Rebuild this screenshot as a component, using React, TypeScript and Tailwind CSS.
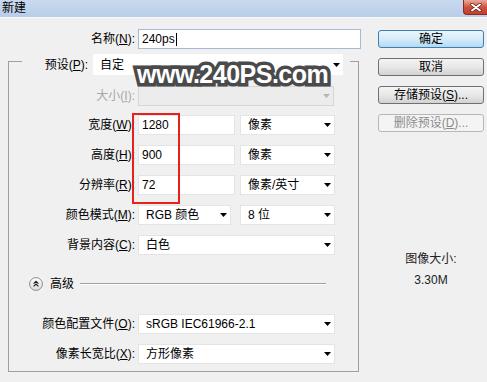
import React from 'react';

const font = "[font-family:'Liberation_Sans','Noto_Sans_CJK_SC',sans-serif]";

function Arrow({ gray }: { gray?: boolean }) {
  return (
    <svg width="7" height="4" viewBox="0 0 7 4" className="mr-[3px] shrink-0">
      <path d="M0 0h7L3.5 4z" fill={gray ? '#b4b4b4' : '#000'} />
    </svg>
  );
}

function Select({ w, children, disabled }: { w: string; children?: React.ReactNode; disabled?: boolean }) {
  return (
    <div
      className={`flex h-[20px] items-center justify-between pl-[7px] ${w} ${
        disabled ? 'border border-[#d6d6d6] bg-[#ececec]' : 'border border-[#e4e4e4] bg-white'
      }`}
    >
      <span className="whitespace-nowrap">{children}</span>
      <Arrow gray={disabled} />
    </div>
  );
}

function Field({ w, children }: { w: string; children: React.ReactNode }) {
  return (
    <div className={`flex h-[20px] items-center border border-[#e4e4e4] bg-white pl-[3px] ${w}`}>{children}</div>
  );
}

function Label({ children, gray }: { children: React.ReactNode; gray?: boolean }) {
  return (
    <div className={`w-[126px] shrink-0 whitespace-nowrap text-right ${gray ? 'text-[#a8a8a8]' : 'text-black'}`}>
      {children}
    </div>
  );
}

function Button({ children, primary, disabled }: { children: React.ReactNode; primary?: boolean; disabled?: boolean }) {
  const look = primary
    ? 'border-[#3c7fb1] bg-linear-to-b from-[#eaf6fd] via-[#d6ecf9] to-[#b2daf2] text-black'
    : disabled
      ? 'border-[#b5b8ba] bg-[#f4f4f4] text-[#8c8c8c]'
      : 'border-[#707070] bg-linear-to-b from-[#f4f4f4] via-[#e8e8e8] to-[#d2d2d2] text-black';
  return (
    <div className={`flex h-[18px] w-[106px] items-center justify-center rounded-[3px] border ${look}`}>{children}</div>
  );
}

function AdvancedIcon() {
  return (
    <svg width="14" height="14" viewBox="0 0 14 14">
      <defs>
        <linearGradient id="adv" x1="0" y1="0" x2="0" y2="1">
          <stop offset="0" stopColor="#ffffff" />
          <stop offset="1" stopColor="#dcdcdc" />
        </linearGradient>
      </defs>
      <circle cx="7" cy="7" r="6.4" fill="url(#adv)" stroke="#8c8c8c" />
      <path d="M4.6 6.6L7 4.3l2.4 2.3M4.6 9.4L7 7.1l2.4 2.3" fill="none" stroke="#222" strokeWidth="1.2" />
    </svg>
  );
}

export default function App() {
  return (
    <div className={`relative h-[382px] w-[487px] overflow-hidden bg-[#f0f0f0] text-[12px] leading-none ${font}`}>
      {/* title bar */}
      <div className="flex h-[18px] items-start justify-between border-b border-[#f7f9fc] bg-linear-to-b from-[#c9daef] to-[#b8cde8]">
        <span className="mt-[2px] ml-[2px] text-[12px] leading-[13px] text-black">新建</span>
        <div className="flex h-[15px] w-[24px] items-center justify-center rounded-bl-[4px] border border-t-0 border-r-0 border-[#8a2b20] bg-linear-to-b from-[#e8aa9c] via-[#d0513e] to-[#c2402c]">
          <svg width="12" height="9" viewBox="0 0 12 9">
            <path d="M2 1.5l8 6M10 1.5l-8 6" stroke="#5a1a12" strokeWidth="3.4" strokeLinecap="round" />
            <path d="M2 1.5l8 6M10 1.5l-8 6" stroke="#fff" strokeWidth="2" strokeLinecap="round" />
          </svg>
        </div>
      </div>

      <div className="flex pt-[11px]">
        {/* left side */}
        <div className="flex w-[370px] flex-col">
          <div className="flex h-[20px] items-center gap-[3px]">
            <div className="w-[135px] text-right">
              名称(<u>N</u>):
            </div>
            <div className="flex h-[20px] w-[223px] items-center border border-[#a6bad4] bg-white pl-[3px]">
              240ps
              <span className="ml-[1px] h-[13px] w-px bg-black" />
            </div>
          </div>

          <div className="mt-[12px] ml-[8px] flex w-[351px] flex-col border border-[#a0a0a0] pb-[7px]">
            <div className="-mt-[8px] ml-[13px] flex h-[21px] w-[328px] items-center bg-[#f0f0f0]">
              <div className="w-[66px] text-right">
                预设(<u>P</u>):
              </div>
              <div className="ml-[5px] flex h-[21px] w-[250px] items-center justify-between bg-white pl-[7px]">
                <span>自定</span>
                <Arrow />
              </div>
            </div>

            <div className="mt-[11px] flex items-center gap-[3px]">
              <Label gray>
                大小(<u>I</u>):
              </Label>
              <Select w="w-[196px]" disabled />
            </div>

            <div className="mt-[9px] flex items-center gap-[3px]">
              <Label>
                宽度(<u>W</u>):
              </Label>
              <Field w="w-[97px]">1280</Field>
              <div className="ml-[2px]">
                <Select w="w-[95px]">像素</Select>
              </div>
            </div>

            <div className="mt-[10px] flex items-center gap-[3px]">
              <Label>
                高度(<u>H</u>):
              </Label>
              <Field w="w-[97px]">900</Field>
              <div className="ml-[2px]">
                <Select w="w-[95px]">像素</Select>
              </div>
            </div>

            <div className="mt-[10px] flex items-center gap-[3px]">
              <Label>
                分辨率(<u>R</u>):
              </Label>
              <Field w="w-[97px]">72</Field>
              <div className="ml-[2px]">
                <Select w="w-[95px]">像素/英寸</Select>
              </div>
            </div>

            <div className="mt-[10px] flex items-center gap-[3px]">
              <Label>
                颜色模式(<u>M</u>):
              </Label>
              <Select w="w-[93px]">RGB 颜色</Select>
              <div className="ml-[6px]">
                <Select w="w-[95px]">8 位</Select>
              </div>
            </div>

            <div className="mt-[10px] flex items-center gap-[3px]">
              <Label>
                背景内容(<u>C</u>):
              </Label>
              <Select w="w-[197px]">白色</Select>
            </div>

            <div className="mt-[21px] ml-[20px] flex h-[16px] items-center">
              <AdvancedIcon />
              <span className="ml-[7px]">高级</span>
              <div className="ml-[6px] h-[2px] w-[246px] border-t border-b border-t-[#a0a0a0] border-b-white" />
            </div>

            <div className="mt-[22px] flex items-center gap-[3px]">
              <Label>
                颜色配置文件(<u>O</u>):
              </Label>
              <Select w="w-[197px]">sRGB IEC61966-2.1</Select>
            </div>

            <div className="mt-[10px] flex items-center gap-[3px]">
              <Label>
                像素长宽比(<u>X</u>):
              </Label>
              <Select w="w-[197px]">方形像素</Select>
            </div>
          </div>
        </div>

        {/* right side */}
        <div className="ml-[8px] flex flex-col pt-[1px]">
          <div className="flex flex-col gap-[10px]">
            <Button primary>确定</Button>
            <Button>取消</Button>
            <Button>
              存储预设(<u>S</u>)...
            </Button>
            <Button disabled>
              删除预设(<u>D</u>)...
            </Button>
          </div>
          <div className="mt-[119px] text-center leading-[16px] text-[#222]">图像大小:</div>
          <div className="mt-[5px] text-center leading-[16px] text-[#222]">3.30M</div>
        </div>
      </div>

      {/* annotations over the screenshot */}
      <div className="pointer-events-none absolute top-[113px] left-[132px] h-[91px] w-[48px] border-2 border-[#e8201c]" />
      <div className="pointer-events-none absolute top-[62px] left-[137px] text-[25px] leading-none font-bold tracking-[-0.5px] whitespace-nowrap text-white [-webkit-text-stroke:7px_#4a4a4a] [paint-order:stroke_fill] [font-family:'Liberation_Sans',sans-serif]">
        www.240PS.com
      </div>
    </div>
  );
}
